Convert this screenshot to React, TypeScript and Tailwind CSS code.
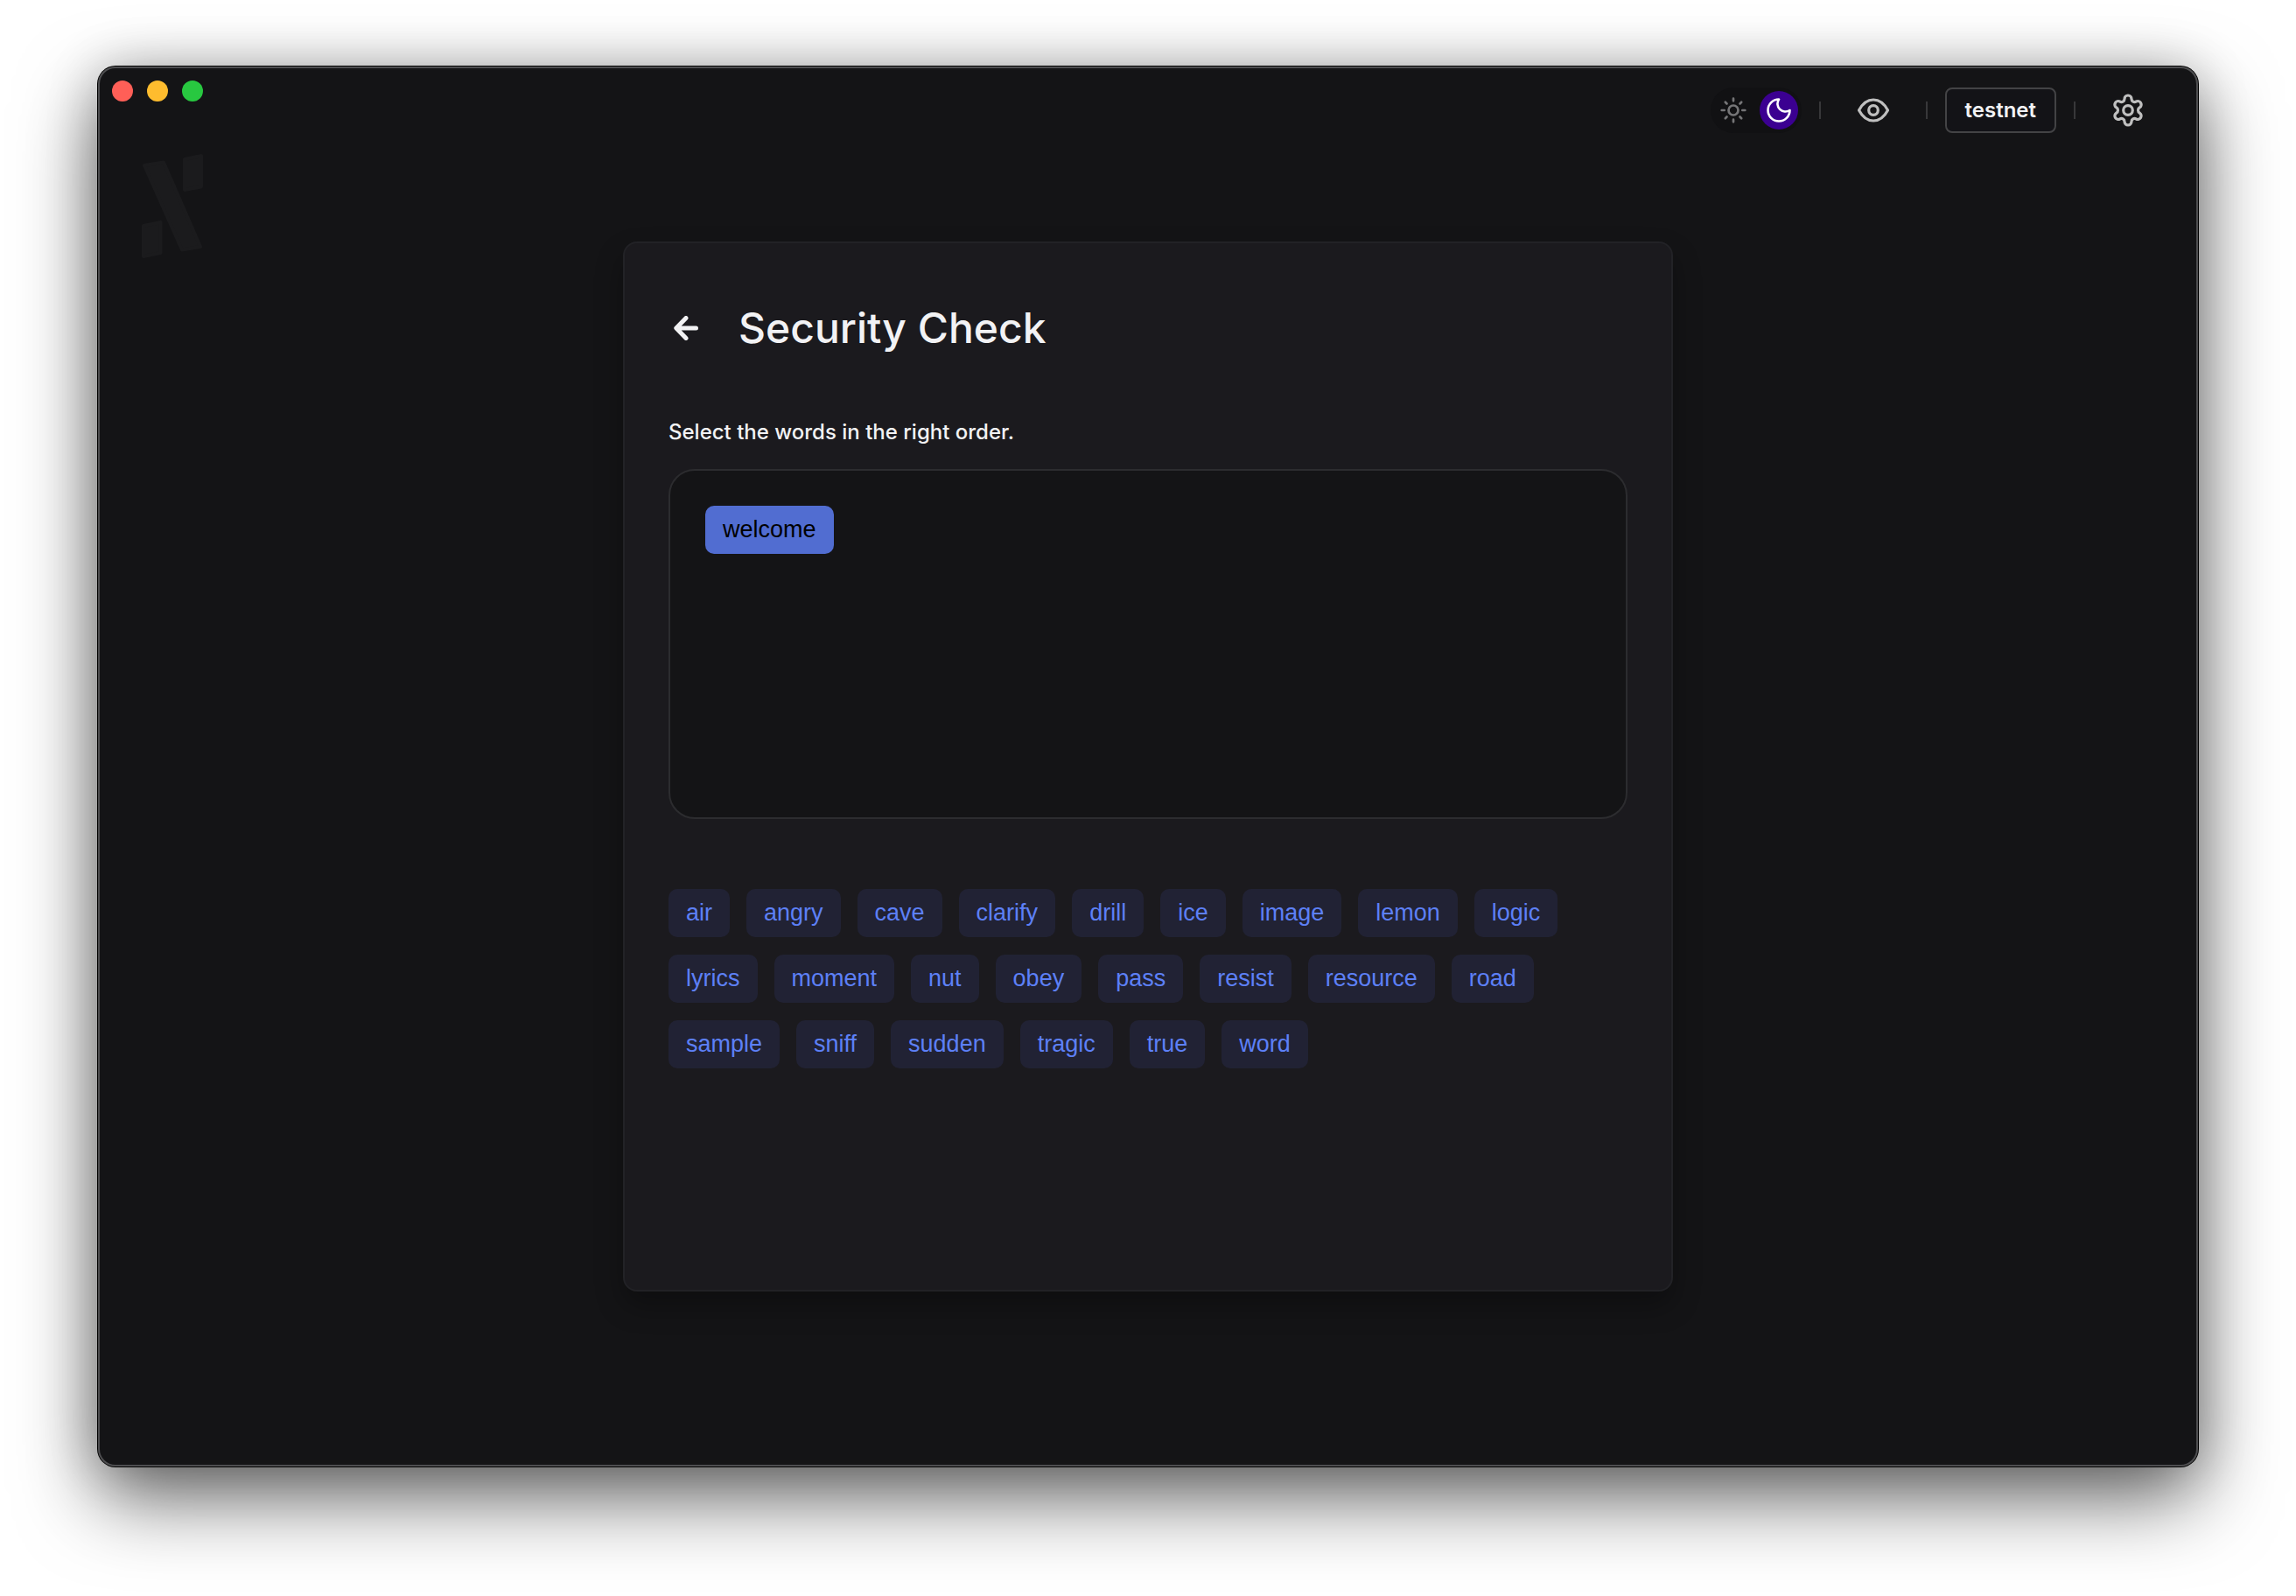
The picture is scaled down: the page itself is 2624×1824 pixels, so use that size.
import React from "react";

const words = [
  "air", "angry", "cave", "clarify", "drill", "ice", "image", "lemon", "logic",
  "lyrics", "moment", "nut", "obey", "pass", "resist", "resource", "road",
  "sample", "sniff", "sudden", "tragic", "true", "word",
];

function Logo() {
  return (
    <svg viewBox="0 0 70 119" className="h-[119px] w-[70px]" fill="#1b1b1d" stroke="#1b1b1d" strokeWidth="4" strokeLinejoin="round" aria-hidden="true">
      <path d="M3 13 L25 9.500 L67 106 L46 109.500 Z" />
      <path d="M49 6 L68 2 L68 37.500 L49 41 Z" />
      <path d="M2 82 L21.500 78 L21.500 113 L2 117 Z" />
    </svg>
  );
}

function ArrowLeftIcon() {
  return (
    <svg viewBox="0 0 28 28" className="size-7" fill="none" stroke="currentColor" strokeWidth="5" strokeLinecap="round" strokeLinejoin="round" aria-hidden="true">
      <path d="M25.500 14H3.500M14 2.500L2.800 14L14 25.500" />
    </svg>
  );
}

function SunIcon() {
  return (
    <svg viewBox="0 0 30 30" className="size-[30px]" fill="none" stroke="#757577" strokeWidth="2.700" strokeLinecap="round" aria-hidden="true">
      <circle cx="15" cy="15" r="5.500" />
      <path d="M15 1.700v2.600M15 25.700v2.600M1.700 15h3M25.300 15h3M5.800 5.800l1.700 1.700M22.500 22.500l1.700 1.700M5.800 24.200l1.700-1.700M22.500 7.500l1.700-1.700" />
    </svg>
  );
}

function MoonIcon() {
  return (
    <svg viewBox="0 0 28 28" className="size-7" fill="none" stroke="#fff" strokeWidth="2.600" strokeLinejoin="round" aria-hidden="true">
      <path d="M14 1.500A12.500 12.500 0 1 0 26.500 14A9 9 0 0 1 14 1.500Z" />
    </svg>
  );
}

function EyeIcon() {
  return (
    <svg viewBox="0 0 36 28" className="h-7 w-9" fill="none" stroke="#bfbfbf" strokeWidth="3.200" strokeLinejoin="round" aria-hidden="true">
      <path d="M1.500 14C5.500 6.500 11 2 18 2s12.500 4.500 16.500 12C30.500 21.500 25 26 18 26S5.500 21.500 1.500 14Z" />
      <circle cx="18" cy="14" r="5.300" />
    </svg>
  );
}

function GearIcon() {
  return (
    <svg viewBox="-18 -19 36 38" className="h-[38px] w-9" fill="none" stroke="#bfbfbf" strokeWidth="3.200" strokeLinejoin="round" aria-hidden="true">
      <circle r="5.300" />
      <path d="M-4 -13A4 4 0 0 1 4 -13A3.510 3.510 0 0 0 9.260 -9.960A4 4 0 0 1 13.260 -3.040A3.510 3.510 0 0 0 13.260 3.040A4 4 0 0 1 9.260 9.960A3.510 3.510 0 0 0 4 13A4 4 0 0 1 -4 13A3.510 3.510 0 0 0 -9.260 9.960A4 4 0 0 1 -13.260 3.040A3.510 3.510 0 0 0 -13.260 -3.040A4 4 0 0 1 -9.260 -9.960A3.510 3.510 0 0 0 -4 -13Z" />
    </svg>
  );
}

function Divider() {
  return <span className="h-5 w-0.5 bg-[#38383a]" />;
}

export default function App() {
  return (
    <div className="flex min-h-screen flex-col bg-white px-[112px] pt-[76px] pb-[148px] font-['Inter',sans-serif] text-[#f2f2f4]">
      <div className="flex grow flex-col rounded-[20px] bg-[#141416] shadow-[inset_0_0_0_2px_#4e4e50,0_0_0_1px_#000,0_36px_90px_rgba(0,0,0,0.6),0_0_60px_rgba(0,0,0,0.2)]">
        <header className="flex items-start justify-between pr-10 pl-4">
          <div>
            <div className="flex gap-4 pt-4">
              <button type="button" aria-label="Close" className="size-6 rounded-full bg-[#ff5f57]" />
              <button type="button" aria-label="Minimize" className="size-6 rounded-full bg-[#febc2e]" />
              <button type="button" aria-label="Zoom" className="size-6 rounded-full bg-[#28c840]" />
            </div>
            <div className="pt-[60px] pl-[34px]">
              <Logo />
            </div>
          </div>
          <nav className="flex items-center gap-5 pt-6">
            <div className="flex h-[52px] w-[104px] items-center justify-between rounded-full bg-[#111113] pr-1 pl-[11px]">
              <button type="button" aria-label="Light theme">
                <SunIcon />
              </button>
              <button type="button" aria-label="Dark theme" className="flex size-11 items-center justify-center rounded-full bg-[#3b0091]">
                <MoonIcon />
              </button>
            </div>
            <Divider />
            <button type="button" aria-label="Toggle balance visibility" className="flex w-20 justify-center">
              <EyeIcon />
            </button>
            <Divider />
            <button type="button" className="h-[52px] rounded-lg border-2 border-[#434345] bg-[#131317] px-[21px] text-2xl font-semibold">
              testnet
            </button>
            <Divider />
            <button type="button" aria-label="Settings" className="flex w-20 justify-center">
              <GearIcon />
            </button>
          </nav>
        </header>
        <main className="mx-auto -mt-[19px] flex min-h-[1200px] w-full max-w-[1200px] flex-col rounded-2xl border-2 border-[#222226] bg-[#1b1a1e] px-[50px] pt-[67px] shadow-[0_16px_32px_rgba(0,0,0,0.3)]">
          <div className="flex items-center gap-10">
            <button type="button" aria-label="Back" className="flex w-10 justify-center">
              <ArrowLeftIcon />
            </button>
            <h1 className="text-5xl leading-[60px] font-medium">Security Check</h1>
          </div>
          <p className="mt-[71px] text-2xl leading-9 font-medium">Select the words in the right order.</p>
          <div className="mt-6 flex h-[400px] items-start rounded-[30px] border-2 border-[#2c2c2f] bg-[#141416] p-10 font-['Liberation_Sans',sans-serif] text-[27px] leading-[31px]">
            <button type="button" className="rounded-[10px] bg-[#516dd1] px-5 py-3 text-black">
              welcome
            </button>
          </div>
          <div className="mt-20 flex flex-wrap gap-x-[19px] gap-y-5 font-['Liberation_Sans',sans-serif] text-[27px] leading-[31px]">
            {words.map((word) => (
              <button key={word} type="button" className="rounded-[10px] bg-[#212234] px-5 py-3 text-[#5d80f7]">
                {word}
              </button>
            ))}
          </div>
        </main>
      </div>
    </div>
  );
}
